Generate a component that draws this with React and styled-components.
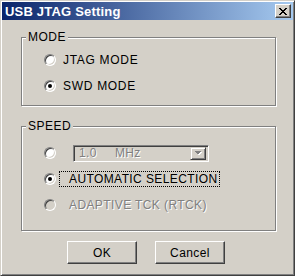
import React from "react";
import styled, { createGlobalStyle } from "styled-components";

const GlobalStyle = createGlobalStyle`
  html, body {
    margin: 0;
    padding: 0;
    background: #d4d0c8;
  }
  body {
    font-family: "Liberation Sans", Arial, sans-serif;
  }
`;

const Window = styled.div`
  box-sizing: border-box;
  width: 295px;
  height: 276px;
  background: #d4d0c8;
  border: 1px solid;
  border-color: #d4d0c8 #404040 #404040 #d4d0c8;
  box-shadow: inset 1px 1px 0 #fff, inset -1px -1px 0 #808080;
  padding: 1px;
  display: flex;
  flex-direction: column;
`;

const TitleBar = styled.div`
  height: 18px;
  flex-shrink: 0;
  display: flex;
  align-items: center;
  padding-left: 3px;
  background: linear-gradient(to right, #0a246a, #a6caf0);
  color: #fff;
  font-weight: bold;
  font-size: 13px;
  letter-spacing: 0.2px;
`;

const CloseButton = styled.div`
  box-sizing: border-box;
  margin-left: auto;
  margin-right: 2px;
  width: 16px;
  height: 14px;
  background: #d4d0c8;
  border: 1px solid;
  border-color: #fff #404040 #404040 #fff;
  box-shadow: inset -1px -1px 0 #808080;
  display: flex;
  align-items: center;
  justify-content: center;
`;

const Body = styled.div`
  padding-left: 19px;
  display: flex;
  flex-direction: column;
`;

const Group = styled.div`
  box-sizing: border-box;
  width: 255px;
  margin-top: ${(p) => p.$top}px;
  padding-bottom: ${(p) => p.$bottom}px;
  border: 1px solid #808080;
  box-shadow: inset 1px 1px 0 #fff, 1px 1px 0 #fff;
`;

const Legend = styled.div`
  width: fit-content;
  margin: -8px 0 0 4px;
  padding: 0 2px;
  background: #d4d0c8;
  font-size: 12px;
  line-height: 14px;
  letter-spacing: 0.5px;
  color: #000;
`;

const Rows = styled.div`
  margin-top: ${(p) => p.$top}px;
  display: flex;
  flex-direction: column;
`;

const Row = styled.div`
  height: 26px;
  display: flex;
  align-items: center;
  padding-left: 22px;
`;

const Radio = styled.span`
  box-sizing: border-box;
  width: 12px;
  height: 12px;
  flex-shrink: 0;
  border-radius: 50%;
  border: 1px solid;
  border-color: #808080 #fff #fff #808080;
  background: ${(p) => (p.$disabled ? "#d4d0c8" : "#fff")};
  box-shadow: inset 1px 1px 0 #404040, inset -1px -1px 0 #d4d0c8;
  display: flex;
  align-items: center;
  justify-content: center;
`;

const Dot = styled.span`
  width: 4px;
  height: 4px;
  border-radius: 50%;
  background: #000;
`;

const Label = styled.span`
  margin-left: ${(p) => p.$gap}px;
  padding: 0 1px 0 ${(p) => p.$pad || 0}px;
  font-size: 12px;
  line-height: 14px;
  letter-spacing: ${(p) => p.$spacing || 0.4}px;
  white-space: nowrap;
  border: 1px ${(p) => (p.$focus ? "dotted #000" : "solid transparent")};
  color: ${(p) => (p.$disabled ? "#808080" : "#000")};
  text-shadow: ${(p) => (p.$disabled ? "1px 1px 0 #fff" : "none")};
`;

const Combo = styled.div`
  box-sizing: border-box;
  width: 136px;
  height: 17px;
  margin-left: 17px;
  padding: 2px 2px 2px 5px;
  border: 1px solid;
  border-color: #808080 #fff #fff #808080;
  box-shadow: inset 1px 1px 0 #404040, inset -1px -1px 0 #d4d0c8;
  background: #d4d0c8;
  display: flex;
  align-items: center;
`;

const ComboText = styled.span`
  font-size: 12px;
  line-height: 13px;
  letter-spacing: 0.4px;
  color: #808080;
  text-shadow: 1px 1px 0 #fff;
  margin-right: ${(p) => p.$gap || 0}px;
`;

const ArrowButton = styled.div`
  box-sizing: border-box;
  margin-left: auto;
  width: 16px;
  height: 13px;
  border: 1px solid;
  border-color: #d4d0c8 #404040 #404040 #d4d0c8;
  box-shadow: inset 1px 1px 0 #fff, inset -1px -1px 0 #808080;
  display: flex;
  align-items: center;
  justify-content: center;
`;

const Buttons = styled.div`
  margin-top: 10px;
  display: flex;
  justify-content: center;
  gap: 18px;
  padding-right: 3px;
`;

const Button = styled.div`
  box-sizing: border-box;
  width: 70px;
  height: 23px;
  background: #d4d0c8;
  border: 1px solid;
  border-color: #fff #404040 #404040 #fff;
  box-shadow: inset -1px -1px 0 #808080;
  display: flex;
  align-items: center;
  justify-content: center;
  font-size: 12px;
  letter-spacing: 0.4px;
  color: #000;
`;

function CloseGlyph() {
  const px = [
    [0, 0], [1, 0], [6, 0], [7, 0],
    [1, 1], [2, 1], [5, 1], [6, 1],
    [2, 2], [3, 2], [4, 2], [5, 2],
    [3, 3], [4, 3],
    [2, 4], [3, 4], [4, 4], [5, 4],
    [1, 5], [2, 5], [5, 5], [6, 5],
    [0, 6], [1, 6], [6, 6], [7, 6],
  ];
  return (
    <svg width="8" height="7" viewBox="0 0 8 7" shapeRendering="crispEdges">
      {px.map(([x, y]) => (
        <rect key={`${x}-${y}`} x={x} y={y} width="1" height="1" fill="#000" />
      ))}
    </svg>
  );
}

function DownArrow() {
  return (
    <svg width="8" height="5" viewBox="0 0 8 5" shapeRendering="crispEdges">
      <polygon points="1,1 8,1 4.5,4.5" fill="#fff" />
      <polygon points="0,0 7,0 3.5,3.5" fill="#808080" />
    </svg>
  );
}

export default function App() {
  return (
    <>
      <GlobalStyle />
      <Window>
        <TitleBar>
          USB JTAG Setting
          <CloseButton>
            <CloseGlyph />
          </CloseButton>
        </TitleBar>
        <Body>
          <Group $top={17} $bottom={6}>
            <Legend>MODE</Legend>
            <Rows $top={3}>
              <Row>
                <Radio />
                <Label $gap={6} $spacing={0.7}>JTAG MODE</Label>
              </Row>
              <Row>
                <Radio>
                  <Dot />
                </Radio>
                <Label $gap={6} $spacing={0.7}>SWD MODE</Label>
              </Row>
            </Rows>
          </Group>

          <Group $top={20} $bottom={12}>
            <Legend>SPEED</Legend>
            <Rows $top={7}>
              <Row>
                <Radio />
                <Combo>
                  <ComboText $gap={18}>1.0</ComboText>
                  <ComboText>MHz</ComboText>
                  <ArrowButton>
                    <DownArrow />
                  </ArrowButton>
                </Combo>
              </Row>
              <Row>
                <Radio>
                  <Dot />
                </Radio>
                <Label $gap={3} $pad={9} $focus>
                  AUTOMATIC SELECTION
                </Label>
              </Row>
              <Row>
                <Radio $disabled />
                <Label $gap={3} $pad={9} $disabled>
                  ADAPTIVE TCK (RTCK)
                </Label>
              </Row>
            </Rows>
          </Group>
        </Body>
        <Buttons>
          <Button>OK</Button>
          <Button>Cancel</Button>
        </Buttons>
      </Window>
    </>
  );
}
